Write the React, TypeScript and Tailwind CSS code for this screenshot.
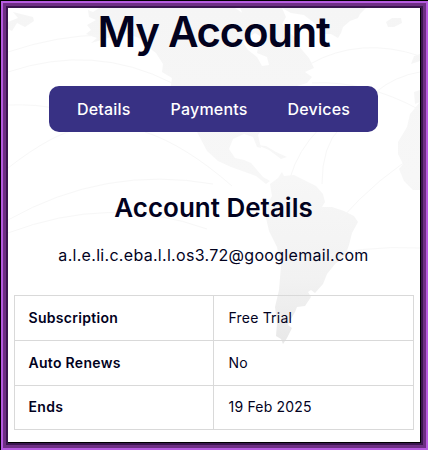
const tabs = ['Details', 'Payments', 'Devices'];

const rows = [
  { label: 'Subscription', value: 'Free Trial', size: 'h-[45px]' },
  { label: 'Auto Renews', value: 'No', size: 'h-[45px]' },
  { label: 'Ends', value: '19 Feb 2025', size: 'h-[44px] *:pb-[2px]' },
];

function WorldMap() {
  return (
    <svg className="absolute inset-0 h-full w-full" viewBox="8 8 412 434" aria-hidden="true">
      <defs>
        <linearGradient id="land" x1="0" y1="8" x2="0" y2="345" gradientUnits="userSpaceOnUse">
          <stop offset="0" stopColor="#f5f5f5" />
          <stop offset="0.5" stopColor="#f7f7f7" />
          <stop offset="0.8" stopColor="#f2f2f2" />
          <stop offset="1" stopColor="#e8e8e8" />
        </linearGradient>
      </defs>
      <g fill="url(#land)">
        {/* north america */}
        <path d="M99 8 L93 12 L88 10 L89 17 L96 20 L87 25 L91 30 L86 34 L97 38 L91 43 L105 39 L116 35 L128 34 L139 38 L148 47 L156 53 L163 64 L162 72 L172 78 L170 91 L177 104 L185 117 L197 132 L207 151 L218 161 L231 167 L245 172 L256 176 L266 184 L270 181 L263 177 L257 170 L251 163 L244 160 L235 158 L229 149 L233 139 L244 134 L253 137 L257 147 L261 148 L258 135 L264 127 L273 120 L277 113 L285 106 L281 99 L287 90 L297 86 L307 83 L312 77 L305 72 L314 68 L309 58 L303 51 L297 44 L288 38 L280 42 L270 38 L259 43 L257 53 L267 57 L269 65 L262 66 L257 57 L248 50 L242 41 L252 35 L263 28 L256 20 L241 12 L235 8 Z" />
        <path d="M240 8 L282 8 L286 17 L282 24 L290 33 L300 42 L270 42 L250 30 Z" />
        {/* greenland */}
        <path d="M282 8 L366 8 L360 14 L358 18 L350 21 L343 27 L341 33 L338 38 L331 34 L325 34 L313 22 L304 15 L291 13 Z" />
        <path d="M8 22 L18 18 L13 12 L25 15 L33 17 L34 21 L25 27 L17 23 L12 31 L8 29 Z" />
        {/* iceland */}
        <path d="M386 22 L392 18 L401 18 L402 23 L394 27 L388 27 Z" />
        {/* ireland */}
        <path d="M420 54 L414 56 L411 64 L420 61 Z" />
        {/* africa */}
        <path d="M420 90 L414 92 L415 104 L420 102 L410 114 L407 127 L398 142 L398 154 L403 164 L399 169 L404 181 L413 190 L420 190 Z" />
        {/* south america */}
        <path d="M270 184 L278 178 L282 172 L284 176 L294 175 L304 180 L316 186 L323 194 L325 202 L322 207 L332 207 L344 211 L354 216 L358 222 L352 233 L349 245 L345 256 L335 264 L327 274 L323 284 L315 293 L311 290 L308 292 L311 297 L305 306 L297 307 L295 312 L291 319 L288 325 L292 328 L287 338 L283 344 L281 339 L276 336 L277 323 L275 307 L279 290 L281 266 L277 247 L269 231 L266 218 L268 203 L272 196 Z" />
        <path d="M257 145 L266 146 L276 152 L287 157 L281 159 L269 150 Z" />
      </g>
      <g fill="none" stroke="#f7f7f7" strokeWidth="1">
        <path d="M8 52 Q58 35 105 35" />
        <path d="M8 72 Q94 43 172 83" />
        <path d="M8 105 Q39 104 57 109" />
        <path d="M8 168 Q53 133 82 128" />
        <path d="M8 220 Q105 165 213 184" />
        <path d="M8 233 Q110 194 207 229" />
        <path d="M145 132 Q185 145 232 186" />
        <path d="M290 178 Q298 150 320 128" />
        <path d="M322 184 Q322 146 340 128" />
        <path d="M310 64 Q360 36 420 56" />
        <path d="M312 83 Q365 80 420 110" />
        <path d="M376 92 Q395 76 420 72" />
        <path d="M310 260 Q360 245 420 248" />
        <path d="M339 221 Q380 175 420 153" />
      </g>
    </svg>
  );
}

export default function App() {
  return (
    <div className="h-[450px] w-[428px] border-t border-l border-black">
      <div className="h-full border-2 border-[#b65be0]">
        <div className="h-full border-[3px] border-[#6e2f84]">
          <div className="h-full border-2 border-[#3b1650]">
            <main className="relative h-full overflow-hidden border-r border-b border-black bg-white font-['Inter',sans-serif] text-[#02021e]">
              <WorldMap />
              <div className="relative flex h-full flex-col items-center pr-px">
                <h1 className="text-[42px] leading-[48px] font-semibold tracking-[-1.3px] whitespace-nowrap">
                  My Account
                </h1>
                <nav className="mt-[30px] flex h-[46px] w-[329px] items-center justify-center gap-10 rounded-[10px] bg-[#383184] text-base font-medium tracking-[0.2px] text-white">
                  {tabs.map((tab) => (
                    <a key={tab} href="#">
                      {tab}
                    </a>
                  ))}
                </nav>
                <h2 className="mt-[58px] text-[26px] leading-9 font-semibold whitespace-nowrap">
                  Account Details
                </h2>
                <p className="mt-[17px] text-base leading-6 tracking-[0.3px]">
                  a.l.e.li.c.eba.l.l.os3.72@googlemail.com
                </p>
                <dl className="mt-7 w-[400px] border-t border-l border-[#d9d9d9] text-sm">
                  {rows.map((row) => (
                    <div key={row.label} className={`flex ${row.size}`}>
                      <dt className="flex w-[199px] items-center border-r border-b border-[#d9d9d9] pl-[14px] font-semibold tracking-[0.3px]">
                        {row.label}
                      </dt>
                      <dd className="flex flex-1 items-center border-r border-b border-[#d9d9d9] pl-[15px] tracking-[0.2px]">
                        {row.value}
                      </dd>
                    </div>
                  ))}
                </dl>
              </div>
            </main>
          </div>
        </div>
      </div>
    </div>
  );
}
